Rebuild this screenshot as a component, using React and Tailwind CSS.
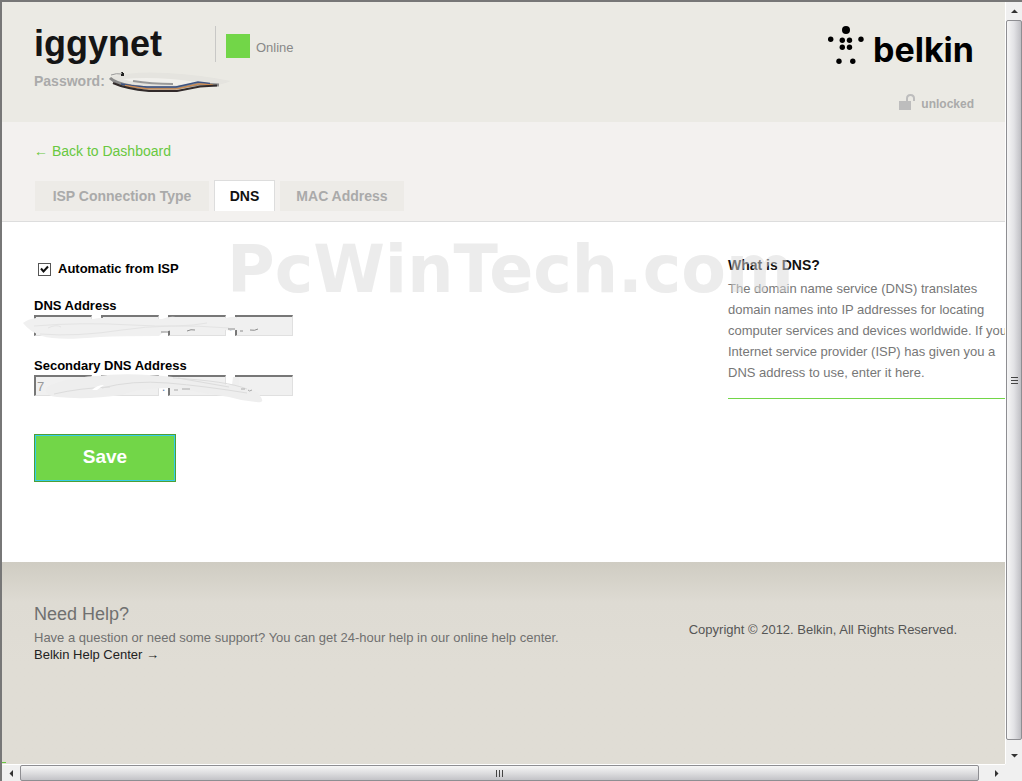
import React from "react";

function BelkinLogo() {
  return (
    <div className="flex h-10 items-start text-black" role="img" aria-label="belkin">
      <svg className="h-10 w-[45px] shrink-0" viewBox="0 0 45 40" fill="currentColor" aria-hidden="true">
        <circle cx="18" cy="4" r="4" />
        <circle cx="2.700" cy="13.200" r="2.700" />
        <circle cx="33" cy="13.200" r="2.700" />
        <circle cx="14.300" cy="14.300" r="2.700" />
        <circle cx="21.500" cy="14.300" r="2.700" />
        <circle cx="14.300" cy="21.300" r="2.700" />
        <circle cx="21.500" cy="21.300" r="2.700" />
        <circle cx="11" cy="35.300" r="2.700" />
        <circle cx="24.800" cy="35.300" r="2.700" />
      </svg>
      <span className="mt-1 font-['Inter',sans-serif] text-[34px] leading-10 font-bold">belkin</span>
    </div>
  );
}

function Header() {
  return (
    <header className="flex h-[120px] shrink-0 justify-between bg-[#ebeae4] pt-5 pr-[31px] pl-8">
      <div>
        <div className="flex items-center">
          <h1 className="w-[181px] text-[36px] leading-11 font-bold text-[#151515]">iggynet</h1>
          <div className="flex h-9 items-center border-l border-[#c8c8c6] pt-1 pl-[10px]">
            <span className="size-6 bg-[#72d648]" />
            <span className="pt-[3px] pl-[6px] text-[13px] text-[#888]">Online</span>
          </div>
        </div>
        <div className="relative mt-[5px] flex">
          <span className="text-[14px] leading-5 font-bold text-[#aaa]">Password:</span>
          <svg className="absolute -top-1 left-[73px] h-8 w-[130px]" viewBox="0 0 130 32" aria-hidden="true">
            <defs>
              <filter id="soft" x="-10%" y="-40%" width="120%" height="180%">
                <feGaussianBlur stdDeviation="0.45" />
              </filter>
            </defs>
            <g filter="url(#soft)" fill="none">
              <path d="M3 10 Q25 4 60 6 T124 14 Q110 20 95 19 L70 24 Q35 25 8 16Z" fill="#e5e4df" />
              <path d="M16 12 Q50 9 90 15 L70 18 Q34 18 16 12Z" fill="#f1f0ec" />
              <path d="M3 11 Q8 16 24 19 L40 21 H68 L92 17 L112 18" stroke="#8a8a8a" strokeWidth="3" />
              <path d="M14 17 Q28 19.500 40 20 H69 L91 15 L103 16.500" stroke="#3d5382" strokeWidth="1.400" />
              <path d="M18 18.500 L40 21.800 H70 L92 16.800 L106 18" stroke="#d18d52" strokeWidth="1.300" />
              <path d="M6 16 Q18 21.500 42 24 H70 L93 19.500 L110 18.500" stroke="#302c2c" strokeWidth="2" />
              <path d="M26 14 Q44 17 66 17" stroke="#999" strokeWidth="2" />
              <path d="M4 8 Q9 6 15 7" stroke="#999" strokeWidth="1" />
            </g>
            <path d="M14 5 h2 v1 h1 v3 h-3 v-2 h1z" fill="#222" />
          </svg>
        </div>
      </div>
      <div className="flex flex-col items-end justify-between pt-1 pb-2">
        <BelkinLogo />
        <div className="flex items-center gap-[6px] text-[12px] leading-5 font-bold text-[#aaa]">
          <svg className="mb-1 h-4 w-4" viewBox="0 0 16 16" aria-hidden="true">
            <rect x="0" y="7" width="12" height="9" fill="#bdbdbd" />
            <path d="M8 7 V4.500 Q8 1 11.500 1 T15 4.500 V7" fill="none" stroke="#bdbdbd" strokeWidth="2" />
          </svg>
          <span>unlocked</span>
        </div>
      </div>
    </header>
  );
}

function Tabs() {
  return (
    <nav className="flex h-[100px] shrink-0 flex-col border-b border-[#ddd] bg-[#f3f1ef] pt-[19px] pl-8">
      <a href="#dashboard" className="self-start text-[14px] leading-5 text-[#68c840]">← Back to Dashboard</a>
      <div className="mt-[19px] flex items-end gap-[5px] pl-px text-center text-[14px] font-bold text-[#aaa]">
        <a href="#isp" className="w-[174px] bg-[#edebe7] leading-[30px]">ISP Connection Type</a>
        <a href="#dns" aria-current="page" className="w-[61px] border border-b-0 border-[#ddd] bg-white leading-[30px] text-[#111]">DNS</a>
        <a href="#mac" className="w-[124px] bg-[#edebe7] leading-[30px]">MAC Address</a>
      </div>
    </nav>
  );
}

function AddressFields({ label, first, dot, children }) {
  return (
    <fieldset>
      <legend className="h-[21px] pt-[2px] text-[13px] leading-5 font-bold text-black">{label}</legend>
      <div className="relative flex h-[21px] text-[13px] text-[#999]">
        {[0, 1, 2, 3].map((n) => (
          <React.Fragment key={n}>
            {n > 0 && <span className="w-[9px] text-center leading-6 text-[#6c85ac]">{n === dot ? "." : ""}</span>}
            <input
              disabled
              aria-label={label + " part " + (n + 1)}
              defaultValue={n === 0 ? first : ""}
              className="h-[21px] w-[58px] border-t-2 border-r border-b border-l-2 border-t-[#777] border-r-[#e0e0e0] border-b-[#e0e0e0] border-l-[#777] bg-[#f0f0f0] px-px"
            />
          </React.Fragment>
        ))}
        {children}
      </div>
    </fieldset>
  );
}

function DnsForm() {
  return (
    <form className="w-[260px] shrink-0 pt-9" onSubmit={(e) => e.preventDefault()}>
      <label className="flex items-center gap-[7px] pl-1 text-[13px] leading-[22px] font-bold text-black">
        <span className="grid size-[13px] place-items-center">
          <input type="checkbox" defaultChecked className="peer col-start-1 row-start-1 size-[13px] appearance-none border border-[#555] bg-white" />
          <svg className="pointer-events-none col-start-1 row-start-1 hidden size-[13px] peer-checked:block" viewBox="0 0 13 13" aria-hidden="true">
            <path d="M3 5.500 L5.500 8.500 L10 3.500" fill="none" stroke="#111" strokeWidth="2" />
          </svg>
        </span>
        Automatic from ISP
      </label>
      <div className="mt-[14px] flex flex-col gap-[18px]">
        <AddressFields label="DNS Address" first="" dot={3}>
          <svg className="absolute -top-[3px] -left-3 h-[30px] w-[260px]" viewBox="0 0 260 30" aria-hidden="true">
            <path d="M70 2 H79 V7 H70Z M137 19 H146 V27 H137Z" fill="#fff" />
            <path d="M1 11 Q6 7 14 6 L71 7 Q80 5 90 6 L140 7 Q150 3 157 6 L204 6 Q214 3 219 7 L240 10 Q248 14 240 18 L214 18 Q208 20 200 17 L150 18 Q140 20 137 24 Q100 24 78 25 Q35 29 20 24 Q8 20 1 11Z" fill="#f0f0f0" />
            <path d="M12 14 Q60 10 110 13 T185 11 M18 22 Q55 25 100 18 T207 16 M26 16 Q34 12 39 15" fill="none" stroke="#e4e4e4" />
            <path d="M139 20 h7 M165 19 q4 -2 8 -1 M206 17 h7 M218 19 h3 M228 18 q5 1 8 -1" fill="none" stroke="#8c8c8c" />
          </svg>
        </AddressFields>
        <AddressFields label="Secondary DNS Address" first="7" dot={2}>
          <svg className="absolute -top-[3px] -left-3 h-9 w-[260px]" viewBox="0 0 260 36" aria-hidden="true">
            <path d="M25 15 Q41 6 74 4 Q106 0 151 5 Q185 11 210 13 L211 5 H214 V15 L228 17 Q238 21 238 24 Q244 31 234 30 Q220 29 207 25 L157 17 L147 16 Q117 16 100 23 Q65 28 35 25 Q20 23 25 15Z" fill="#eee" />
            <path d="M77 8 H82 V24 H77Z M211 5 H217 V24 H211Z" fill="#eee" />
            <path d="M80 16 Q110 8 146 11 T225 21 M151 6 Q205 9 225 17 M32 22 Q58 16 88 15 M156 6 L207 15" fill="none" stroke="#dcdcdc" />
            <path d="M70 18 Q75 13 82 13 L75 18Z" fill="#fff" />
            <path d="M152 18 h4 M160 17 h8 M219 17 h4 M226 18 q1 2 4 0" fill="none" stroke="#aaa" />
          </svg>
        </AddressFields>
      </div>
      <button type="submit" className="mt-[38px] h-12 w-[142px] border border-[#4f9f33] bg-[#72d648] pb-[2px] text-[19px] font-bold text-white inset-ring inset-ring-[#35ccea]">
        Save
      </button>
    </form>
  );
}

function Main() {
  return (
    <main className="relative flex h-[340px] shrink-0 justify-between overflow-hidden bg-white pl-8">
      <DnsForm />
      <aside className="-mr-2 w-[285px] shrink-0 pt-8">
        <h2 className="text-[14px] leading-[22px] font-bold text-[#111]">What is DNS?</h2>
        <p className="mt-[2px] text-[13px] leading-[21px] text-[#777]">
          The domain name service (DNS) translates domain names into IP addresses for locating computer services and devices worldwide. If your Internet service provider (ISP) has given you a DNS address to use, enter it here.
        </p>
        <div className="mt-[15px] h-px bg-[#72d648]" />
      </aside>
      <div className="pointer-events-none absolute top-2 left-[225px] font-['DejaVu_Sans',sans-serif] text-[65px] leading-[80px] font-bold whitespace-nowrap text-[#d9d9d9]/50">
        PcWinTech.com
      </div>
    </main>
  );
}

function Footer() {
  return (
    <footer className="relative flex flex-1 items-start justify-between bg-[#e0ddd5] bg-linear-to-b from-[#cfccc2] via-[#dedbd3] via-20% to-[#e0ddd5] to-50% pt-10 pr-12 pl-8 text-[13px]">
      <div>
        <h2 className="text-[18px] leading-6 text-[#707070]">Need Help?</h2>
        <p className="pt-[3px] leading-[17px] text-[#707070]">Have a question or need some support? You can get 24-hour help in our online help center.</p>
        <a href="#help" className="block leading-[17px] text-[#222]">Belkin Help Center →</a>
      </div>
      <p className="pt-[18px] leading-5 text-[#555]">Copyright © 2012. Belkin, All Rights Reserved.</p>
      <span className="absolute bottom-px left-0 h-px w-1 bg-[#68c840]" />
    </footer>
  );
}

function Arrow({ label, path, className }) {
  return (
    <button type="button" aria-label={label} className={"grid shrink-0 place-items-center " + className}>
      <svg className="size-[9px]" viewBox="0 0 9 9" aria-hidden="true"><path d={path} fill="#333" /></svg>
    </button>
  );
}

export default function App() {
  return (
    <div className="grid h-screen grid-cols-[minmax(0,1fr)_17px] grid-rows-[minmax(0,1fr)_17px] border-t-2 border-l-2 border-[#777] bg-[#f0f0f0] font-['Liberation_Sans',Arial,sans-serif]">
      <div className="flex min-h-0 flex-col overflow-hidden">
        <Header />
        <Tabs />
        <Main />
        <Footer />
      </div>
      <div className="flex flex-col border-l border-white">
        <Arrow label="Scroll up" path="M1 6 L4.500 2.500 L8 6Z" className="h-[18px]" />
        <div className="mb-[7px] flex flex-1 flex-col items-center justify-center gap-[2px] rounded-xs border border-[#8e8e92] bg-linear-to-r from-[#f6f6f6] via-[#e2e2e5] to-[#bfbfc4]">
          <span className="h-px w-[7px] bg-[#444]" />
          <span className="h-px w-[7px] bg-[#444]" />
          <span className="h-px w-[7px] bg-[#444]" />
        </div>
        <Arrow label="Scroll down" path="M1 3 L4.500 6.500 L8 3Z" className="h-[17px]" />
      </div>
      <div className="flex border-t border-white">
        <Arrow label="Scroll left" path="M6 1 L2.500 4.500 L6 8Z" className="w-[18px]" />
        <div className="mr-[9px] flex flex-1 items-center justify-center gap-[2px] rounded-xs border border-[#8e8e92] bg-linear-to-b from-[#f6f6f6] via-[#dedee0] to-[#c3c3c7]">
          <span className="h-[7px] w-px bg-[#444]" />
          <span className="h-[7px] w-px bg-[#444]" />
          <span className="h-[7px] w-px bg-[#444]" />
        </div>
        <Arrow label="Scroll right" path="M3 1 L6.500 4.500 L3 8Z" className="w-[17px]" />
      </div>
      <div className="bg-[#f0f0f0]" />
    </div>
  );
}
